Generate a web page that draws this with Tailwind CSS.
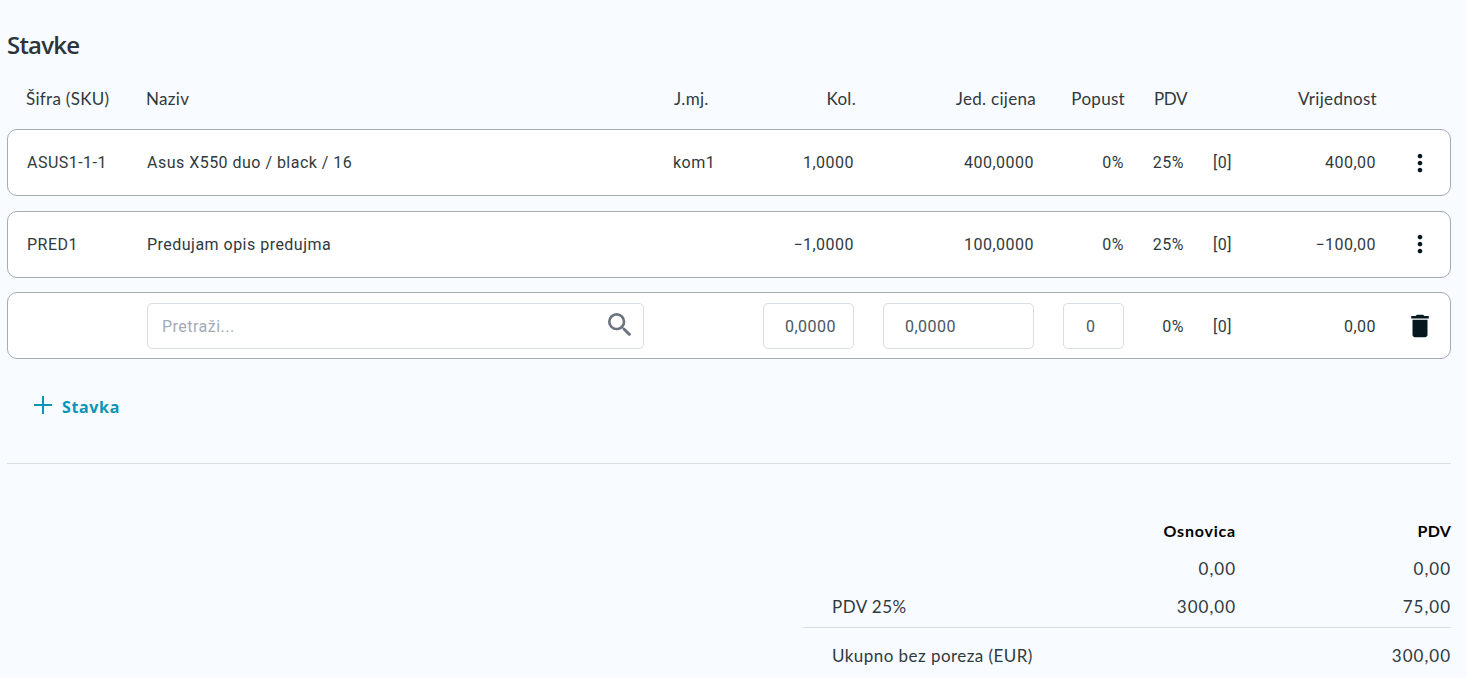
<!DOCTYPE html>
<html lang="hr">
<head>
<meta charset="UTF-8">
<title>Stavke</title>
<script src="https://cdn.jsdelivr.net/npm/@tailwindcss/browser@4"></script>
</head>
<body class="bg-[#f8fbff] text-[#2f3a40] font-['Roboto',sans-serif] overflow-hidden h-[678px]">
<div class="pl-[7px] pr-[16px]">
  <!-- Title -->
  <h2 class="pt-[30px] h-[74px] text-[24px] leading-[30px] font-semibold font-['Open_Sans',sans-serif] tracking-[-0.8px] text-[#2b3539]">Stavke</h2>

  <!-- Column headers -->
  <div class="grid grid-cols-[120px_528px_90px_92px_180px_89px_62px_30px_160px] h-[49px] items-center text-[17px] leading-[20px] font-['Lato',sans-serif] tracking-[0.3px] pl-[19px]">
    <span>Šifra (SKU)</span>
    <span>Naziv</span>
    <span>J.mj.</span>
    <span class="text-right">Kol.</span>
    <span class="text-right">Jed. cijena</span>
    <span class="text-right">Popust</span>
    <span class="text-right tracking-[-0.4px]">PDV</span>
    <span></span>
    <span class="text-right">Vrijednost</span>
  </div>

  <!-- Rows -->
  <div class="flex flex-col text-[16px] tracking-[0.48px] mt-[6px]">
    <div class="grid grid-cols-[120px_526px_90px_91px_180px_90px_60px_76px_116px_74px] h-[67px] items-center bg-white border border-[#a3abb5] rounded-[10px] pl-[19px]">
      <span>ASUS1-1-1</span>
      <span>Asus X550 duo / black / 16</span>
      <span>kom1</span>
      <span class="text-right">1,0000</span>
      <span class="text-right">400,0000</span>
      <span class="text-right">0%</span>
      <span class="text-right">25%</span>
      <span class="pl-[29px]">[0]</span>
      <span class="text-right">400,00</span>
      <span class="flex justify-center pl-[14px]">
        <svg class="w-[28px] h-[28px] fill-[#06181f]" viewBox="0 0 24 24"><path d="M12 8c1.1 0 2-.9 2-2s-.9-2-2-2-2 .9-2 2 .9 2 2 2zm0 2c-1.1 0-2 .9-2 2s.9 2 2 2 2-.9 2-2-.9-2-2-2zm0 6c-1.1 0-2 .9-2 2s.9 2 2 2 2-.9 2-2-.9-2-2-2z"/></svg>
      </span>
    </div>

    <div class="grid grid-cols-[120px_526px_90px_91px_180px_90px_60px_76px_116px_74px] h-[67px] items-center bg-white border border-[#a3abb5] rounded-[10px] pl-[19px] mt-[15px]">
      <span>PRED1</span>
      <span>Predujam opis predujma</span>
      <span></span>
      <span class="text-right">−1,0000</span>
      <span class="text-right">100,0000</span>
      <span class="text-right">0%</span>
      <span class="text-right">25%</span>
      <span class="pl-[29px]">[0]</span>
      <span class="text-right">−100,00</span>
      <span class="flex justify-center pl-[14px] -mt-[1px]">
        <svg class="w-[28px] h-[28px] fill-[#06181f]" viewBox="0 0 24 24"><path d="M12 8c1.1 0 2-.9 2-2s-.9-2-2-2-2 .9-2 2 .9 2 2 2zm0 2c-1.1 0-2 .9-2 2s.9 2 2 2 2-.9 2-2-.9-2-2-2zm0 6c-1.1 0-2 .9-2 2s.9 2 2 2 2-.9 2-2-.9-2-2-2z"/></svg>
      </span>
    </div>

    <!-- New item row -->
    <div class="grid grid-cols-[120px_526px_90px_91px_29px_151px_29px_61px_60px_76px_116px_74px] h-[67px] items-center bg-white border border-[#a3abb5] rounded-[10px] pl-[19px] mt-[14px]">
      <span></span>
      <div class="relative w-[497px]">
        <input type="text" placeholder="Pretraži..." class="w-full h-[46px] bg-white border border-[#d8dde6] rounded-[5px] pt-[2px] pl-[14px] pr-[48px] outline-none placeholder:text-[#a3abb5]">
        <svg class="absolute right-[8px] top-[6px] w-[32px] h-[32px] fill-[#6b7280]" viewBox="0 0 24 24"><path d="M15.5 14h-.79l-.28-.27A6.471 6.471 0 0 0 16 9.5 6.5 6.5 0 1 0 9.5 16c1.61 0 3.09-.59 4.23-1.57l.27.28v.79l5 4.99L20.49 19l-4.99-5zm-6 0C7.01 14 5 11.99 5 9.5S7.01 5 9.5 5 14 7.01 14 9.5 11.99 14 9.5 14z"/></svg>
      </div>
      <span></span>
      <input type="text" value="0,0000" class="w-[91px] h-[46px] bg-white border border-[#d8dde6] rounded-[5px] pt-[2px] pr-[17px] text-right outline-none text-[#4b5563]">
      <span></span>
      <input type="text" value="0,0000" class="w-[151px] h-[46px] bg-white border border-[#d8dde6] rounded-[5px] pt-[2px] pl-[21px] outline-none text-[#4b5563]">
      <span></span>
      <input type="text" value="0" class="w-[61px] h-[46px] bg-white border border-[#d8dde6] rounded-[5px] pt-[2px] pl-[22px] outline-none text-[#4b5563]">
      <span class="text-right pt-[2px]">0%</span>
      <span class="pl-[29px] pt-[2px]">[0]</span>
      <span class="text-right pt-[2px]">0,00</span>
      <span class="flex justify-center pl-[14px]">
        <svg class="w-[30px] h-[30px] fill-[#06181f]" viewBox="0 0 24 24"><path d="M6 19c0 1.1.9 2 2 2h8c1.1 0 2-.9 2-2V7H6v12zM19 4h-3.5l-1-1h-5l-1 1H5v2h14V4z"/></svg>
      </span>
    </div>
  </div>

  <!-- Add item -->
  <div class="flex items-center h-[46px] mt-[24px] pl-[24px] text-[#0a95b5]">
    <svg class="w-[24px] h-[24px] -mt-[2px] stroke-[#0a95b5] stroke-2 fill-none" viewBox="0 0 24 24"><path d="M12 3v18M3 12h18"/></svg>
    <span class="ml-[7px] pt-[2px] text-[16px] font-bold font-['Noto_Sans',sans-serif] tracking-[0.65px]">Stavka</span>
  </div>

  <hr class="mt-[34px] border-t border-[#d8dde6]">

  <!-- Totals -->
  <div class="ml-auto w-[648px] mt-[48px] text-[17px] font-['Lato',sans-serif] tracking-[0.45px]">
    <div class="grid grid-cols-[1fr_140px_215px] h-[38px] items-center pl-[29px] font-bold text-black text-[16px]">
      <span></span>
      <span class="text-right tracking-[0.8px]">Osnovica</span>
      <span class="text-right tracking-[0.2px]">PDV</span>
    </div>
    <div class="grid grid-cols-[1fr_140px_215px] h-[38px] items-center pl-[29px] tracking-[1px]">
      <span></span>
      <span class="text-right">0,00</span>
      <span class="text-right">0,00</span>
    </div>
    <div class="grid grid-cols-[1fr_140px_215px] h-[38px] items-center pl-[29px]">
      <span>PDV 25%</span>
      <span class="text-right tracking-[1px]">300,00</span>
      <span class="text-right tracking-[1px]">75,00</span>
    </div>
    <div class="grid grid-cols-[1fr_140px_215px] h-[57px] items-center pl-[29px] border-t border-[#d8dde6] mt-[1px]">
      <span class="col-span-2">Ukupno bez poreza (EUR)</span>
      <span class="text-right tracking-[1px]">300,00</span>
    </div>
  </div>
</div>
</body>
</html>
